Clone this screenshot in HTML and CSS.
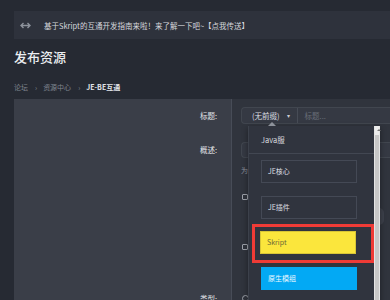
FILE: index.html
```html
<!DOCTYPE html>
<html lang="zh-CN">
  <head>
    <meta charset="UTF-8" />
    <meta name="viewport" content="width=device-width, initial-scale=1.0" />
    <link rel="stylesheet" href="styles.css">
  </head>
  <body>
    <div class="notice">
      <svg class="notice-icon" width="11" height="7" viewBox="0 0 11 7">
        <path d="M1 3.5h9M3.5 1L1 3.5 3.5 6M7.5 1L10 3.5 7.5 6" fill="none" stroke="#8d929b" stroke-width="1.4"/>
      </svg>
      <span>基于Skript的互通开发指南来啦！来了解一下吧~【点我传送】</span>
    </div>

    <h1>发布资源</h1>

    <div class="crumbs">
      <span>论坛</span><span class="sep">›</span><span>资源中心</span><span class="sep">›</span><b>JE-BE互通</b>
    </div>

    <div class="panel">
      <div class="row row-title">
        <div class="label">标题:</div>
        <div class="field">
          <div class="input-group">
            <span class="prefix">(无前缀)</span>
            <span class="caret">▾</span>
            <span class="placeholder">标题...</span>
          </div>

          <div class="menu">
            <div class="menu-list">
              <div class="menu-head">Java服</div>
              <div class="item">JE核心</div>
              <div class="item">JE插件</div>
              <div class="mark">
                <div class="item item-yellow">Skript</div>
              </div>
              <div class="item item-blue">原生模组</div>
            </div>
            <div class="scroll">
              <div class="scroll-up"></div>
            </div>
          </div>
        </div>
      </div>

      <div class="row row-desc">
        <div class="label">概述:</div>
        <div class="field">
          <div class="input"></div>
          <div class="hint">为你的资源写一句简短的概述</div>
          <div class="option option-first">
            <span class="check"></span>
            <span class="help"></span>
          </div>
          <div class="option">
            <span class="check"></span>
          </div>
        </div>
      </div>

      <div class="row row-type">
        <div class="label">类型:</div>
        <div class="field">
          <span class="type-icon"></span>
        </div>
      </div>
    </div>
  </body>
</html>
```

FILE: styles.css
```css
body {
  margin: 0;
  height: 300px;
  overflow: hidden;
  background-color: #262a33;
  color: #e2e4e8;
  font-family: "Noto Sans CJK SC", "Noto Sans", sans-serif;
}

.notice {
  margin: 11px 0 0 14px;
  height: 28px;
  background-color: #2e323c;
  display: flex;
  align-items: center;
  font-size: 7.5px;
  color: #d6d8dc;
}
.notice-icon {
  margin-left: 6px;
  margin-right: 13px;
}

h1 {
  margin: 9px 0 0 14px;
  font-size: 13px;
  line-height: 18px;
  font-weight: 500;
  color: #eceef1;
}

.crumbs {
  margin: 16px 0 0 14px;
  font-size: 7px;
  line-height: 10px;
  color: #7f848e;
}
.crumbs .sep {
  margin: 0 6px 0 7px;
}
.crumbs b {
  color: #e4e6ea;
}

.panel {
  margin: 7px 0 0 14px;
}
.row {
  display: grid;
  grid-template-columns: 218px 1fr;
}
.label {
  background-color: #3a3e48;
  border-right: 1px solid #474c57;
  text-align: right;
  padding-right: 14px;
  font-size: 7.5px;
  color: #e3e5e9;
}
.field {
  background-color: #30343d;
  padding-left: 9px;
  position: relative;
}

.row-title .label {
  padding-top: 8px;
  line-height: 17px;
}
.row-title .field {
  padding-top: 8px;
  padding-bottom: 9px;
}
.input-group {
  height: 15px;
  background-color: #353943;
  border: 1px solid #41464f;
  border-right: none;
  border-radius: 4px 0 0 4px;
  display: flex;
  align-items: center;
  font-size: 7.5px;
}
.prefix {
  margin-left: 10px;
  color: #d9dbe0;
}
.caret {
  margin-left: 7px;
  font-size: 6px;
  color: #c9ccd2;
}
.placeholder {
  margin-left: 7px;
  padding-left: 7px;
  border-left: 1px solid #474c56;
  line-height: 15px;
  color: #686d77;
}

.menu {
  position: absolute;
  left: 16px;
  top: 27px;
  width: 132px;
  height: 200px;
  z-index: 2;
  display: flex;
  background-color: #30343e;
  box-shadow: 0 2px 6px rgba(0, 0, 0, 0.4);
}
.menu::before {
  content: "";
  position: absolute;
  left: 20px;
  top: -4px;
  border-left: 4px solid transparent;
  border-right: 4px solid transparent;
  border-bottom: 4px solid #8d929a;
}
.menu-list {
  flex: 1;
  border-left: 1px solid #3c414b;
}
.menu-head {
  height: 27px;
  line-height: 27px;
  padding-left: 12px;
  border-bottom: 1px solid #424752;
  font-size: 7.5px;
  color: #d8dade;
}
.item {
  width: 88px;
  height: 21px;
  line-height: 21px;
  padding-left: 6px;
  margin: 6px 0 0 12px;
  border: 1px solid #444955;
  font-size: 7px;
  color: #dcdee2;
}
.item + .item {
  margin-top: 13px;
}
.mark {
  width: 106px;
  margin: 5px 0 0 3px;
  padding: 4px 5px 6px;
  border: 3px solid #ef3b36;
}
.mark .item {
  margin: 0;
}
.item-yellow {
  background-color: #fbe63c;
  border-color: #d8c536;
  color: #6d6636;
}
.mark + .item {
  margin-top: 4px;
}
.item-blue {
  background-color: #03a9f4;
  border-color: #03a9f4;
  color: #eef8ff;
}
.scroll {
  width: 8px;
  background-color: #c7c7c7;
  border-left: 1px solid #e4e4e4;
  border-right: 1px solid #e4e4e4;
}
.scroll-up {
  height: 9px;
  background-color: #ececec;
  position: relative;
}
.scroll-up::after {
  content: "";
  position: absolute;
  left: 2px;
  top: 3px;
  border-left: 2px solid transparent;
  border-right: 2px solid transparent;
  border-bottom: 2px solid #777;
}

.row-desc .label {
  padding-top: 9px;
  line-height: 16px;
}
.row-desc .field {
  padding-top: 9px;
  padding-bottom: 5px;
}
.input {
  height: 14px;
  background-color: #353943;
  border: 1px solid #41464f;
  border-right: none;
  border-radius: 4px 0 0 4px;
}
.hint {
  margin-top: 6px;
  line-height: 12px;
  font-size: 7px;
  color: #8c919a;
  white-space: nowrap;
}
.option {
  height: 40px;
  display: flex;
  justify-content: space-between;
}
.option-first {
  margin-top: 18px;
  height: 50px;
}
.check {
  width: 4px;
  height: 4px;
  margin-left: 1px;
  border: 1px solid #9ea2aa;
  border-radius: 1px;
}
.help {
  width: 30px;
  height: 17px;
  margin: 14px 6px 0 0;
  border-radius: 5px;
  background-color: #3d414b;
}

.row-type .label {
  padding-top: 2px;
  line-height: 16px;
}
.row-type .field {
  padding-top: 6px;
}
.type-icon {
  display: block;
  width: 5px;
  height: 5px;
  margin-left: 1px;
  border: 1px solid #9ea2aa;
  border-radius: 50%;
}
```
